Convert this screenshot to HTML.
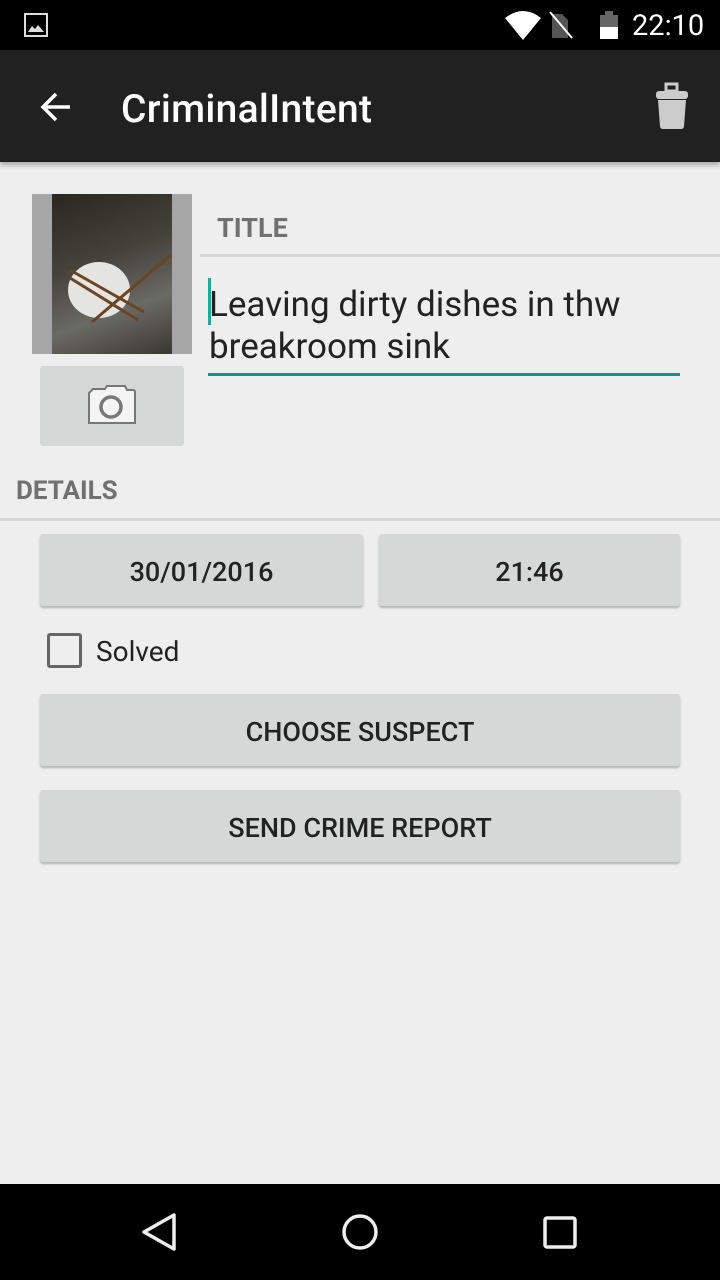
<!DOCTYPE html>
<html><head><meta charset="utf-8"><style>
*{margin:0;padding:0;box-sizing:border-box}
body{width:720px;height:1280px;background:#eeeeee;font-family:"Roboto","Liberation Sans",sans-serif;position:relative;overflow:hidden}
.abs{position:absolute}
.btn{position:absolute;background:#d6d7d7;border-radius:3px;box-shadow:0 2px 2px rgba(0,0,0,.25);display:flex;align-items:center;justify-content:center;font-size:27px;color:#222;font-weight:500;padding-top:4px}
</style></head><body>
<div class="abs" style="left:0;top:0;width:720px;height:50px;background:#000"></div>
<svg class="abs" style="left:24px;top:13px" width="24" height="24" viewBox="0 0 24 24"><rect x="1" y="1" width="22" height="22" fill="none" stroke="#ddd" stroke-width="2"/><path d="M4 19 L8 13 L11 16 L14 12 L20 19Z" fill="#ddd"/></svg>
<svg class="abs" style="left:505px;top:10px" width="40" height="30" viewBox="0 0 40 30"><path d="M0 8 Q18 -6 36 8 L18 30Z" fill="#fff"/></svg>
<svg class="abs" style="left:548px;top:10px" width="26" height="30" viewBox="0 0 26 30"><path d="M4 4 H14 L20 10 V28 H4Z" fill="#555"/><line x1="2" y1="2" x2="24" y2="28" stroke="#fff" stroke-width="2"/></svg>
<div class="abs" style="left:600px;top:15px;width:18px;height:24px;background:#666"></div>
<div class="abs" style="left:600px;top:27px;width:18px;height:12px;background:#fff"></div>
<div class="abs" style="left:605px;top:11px;width:8px;height:4px;background:#666"></div>
<div class="abs" style="left:632px;top:9px;color:#fff;font-size:29px">22:10</div>
<div class="abs" style="left:0;top:50px;width:720px;height:112px;background:#212121;box-shadow:0 3px 5px rgba(0,0,0,.3)"></div>
<svg class="abs" style="left:38px;top:89px" width="36" height="36" viewBox="0 0 36 36"><path d="M32 18 H6 M18 5 L5 18 L18 31" stroke="#fff" stroke-width="3.5" fill="none"/></svg>
<div class="abs" style="left:121px;top:86px;color:#fff;font-size:39px;font-weight:500;letter-spacing:0.3px">CriminalIntent</div>
<svg class="abs" style="left:654px;top:82px" width="36" height="48" viewBox="0 0 36 48"><rect x="12" y="2" width="11" height="7" fill="none" stroke="#ccc" stroke-width="3"/><rect x="2" y="9" width="32" height="8" rx="3" fill="#ccc"/><path d="M4 18 H32 L30 44 Q30 47 27 47 H9 Q6 47 6 44Z" fill="#ccc"/></svg>
<div class="abs" style="left:32px;top:194px;width:160px;height:160px;background:#a6a6a6"></div>
<div class="abs" style="left:52px;top:194px;width:120px;height:160px;background:linear-gradient(160deg,#2a2620,#45423c 40%,#6a6a64 70%,#3a3732)"></div>
<div class="abs" style="left:68px;top:262px;width:62px;height:56px;border-radius:50%;background:#e4e4e0"></div>
<svg class="abs" style="left:52px;top:194px" width="120" height="160"><line x1="18" y1="76" x2="92" y2="118" stroke="#6b4424" stroke-width="3"/><line x1="18" y1="84" x2="86" y2="126" stroke="#6b4424" stroke-width="3"/><line x1="120" y1="60" x2="40" y2="128" stroke="#6b4424" stroke-width="3"/></svg>
<div class="abs" style="left:40px;top:366px;width:144px;height:80px;background:#d6d7d7;border-radius:3px"></div>
<svg class="abs" style="left:87px;top:385px" width="50" height="40" viewBox="0 0 50 40"><path d="M2 8 L6 4 H18 L20 1 H38 L40 5 H46 Q48 5 48 7 V38 H2Z" fill="#f4f4f4" stroke="#777" stroke-width="2"/><circle cx="24" cy="22" r="10" fill="none" stroke="#777" stroke-width="3.5"/></svg>
<div class="abs" style="left:217px;top:212px;font-size:27px;font-weight:bold;color:#707070">TITLE</div>
<div class="abs" style="left:200px;top:254px;width:520px;height:3px;background:#d5d5d5"></div>
<div class="abs" style="left:208px;top:278px;width:3px;height:47px;background:#26a69a"></div>
<div class="abs" style="left:209px;top:284px;font-size:35px;color:#222;line-height:42px;width:480px">Leaving dirty dishes in thw breakroom sink</div>
<div class="abs" style="left:208px;top:373px;width:472px;height:3px;background:#009688"></div>
<div class="abs" style="left:16px;top:476px;font-size:26px;font-weight:bold;color:#707070">DETAILS</div>
<div class="abs" style="left:0;top:518px;width:720px;height:3px;background:#d5d5d5"></div>
<div class="btn" style="left:40px;top:534px;width:323px;height:72px">30/01/2016</div>
<div class="btn" style="left:379px;top:534px;width:301px;height:72px">21:46</div>
<div class="abs" style="left:47px;top:633px;width:35px;height:35px;border:3px solid #666;border-radius:3px"></div>
<div class="abs" style="left:96px;top:635px;font-size:28px;color:#222">Solved</div>
<div class="btn" style="left:40px;top:694px;width:640px;height:72px">CHOOSE SUSPECT</div>
<div class="btn" style="left:40px;top:790px;width:640px;height:72px">SEND CRIME REPORT</div>
<div class="abs" style="left:0;top:1184px;width:720px;height:96px;background:#000"></div>
<svg class="abs" style="left:140px;top:1210px" width="440" height="48" viewBox="0 0 440 48"><path d="M34 5 V39 L4 22Z" fill="none" stroke="#eee" stroke-width="3.5" stroke-linejoin="round"/><circle cx="220" cy="22" r="16" fill="none" stroke="#eee" stroke-width="3.5"/><rect x="405" y="8" width="30" height="29" rx="2" fill="none" stroke="#eee" stroke-width="3.5"/></svg>
</body></html>
